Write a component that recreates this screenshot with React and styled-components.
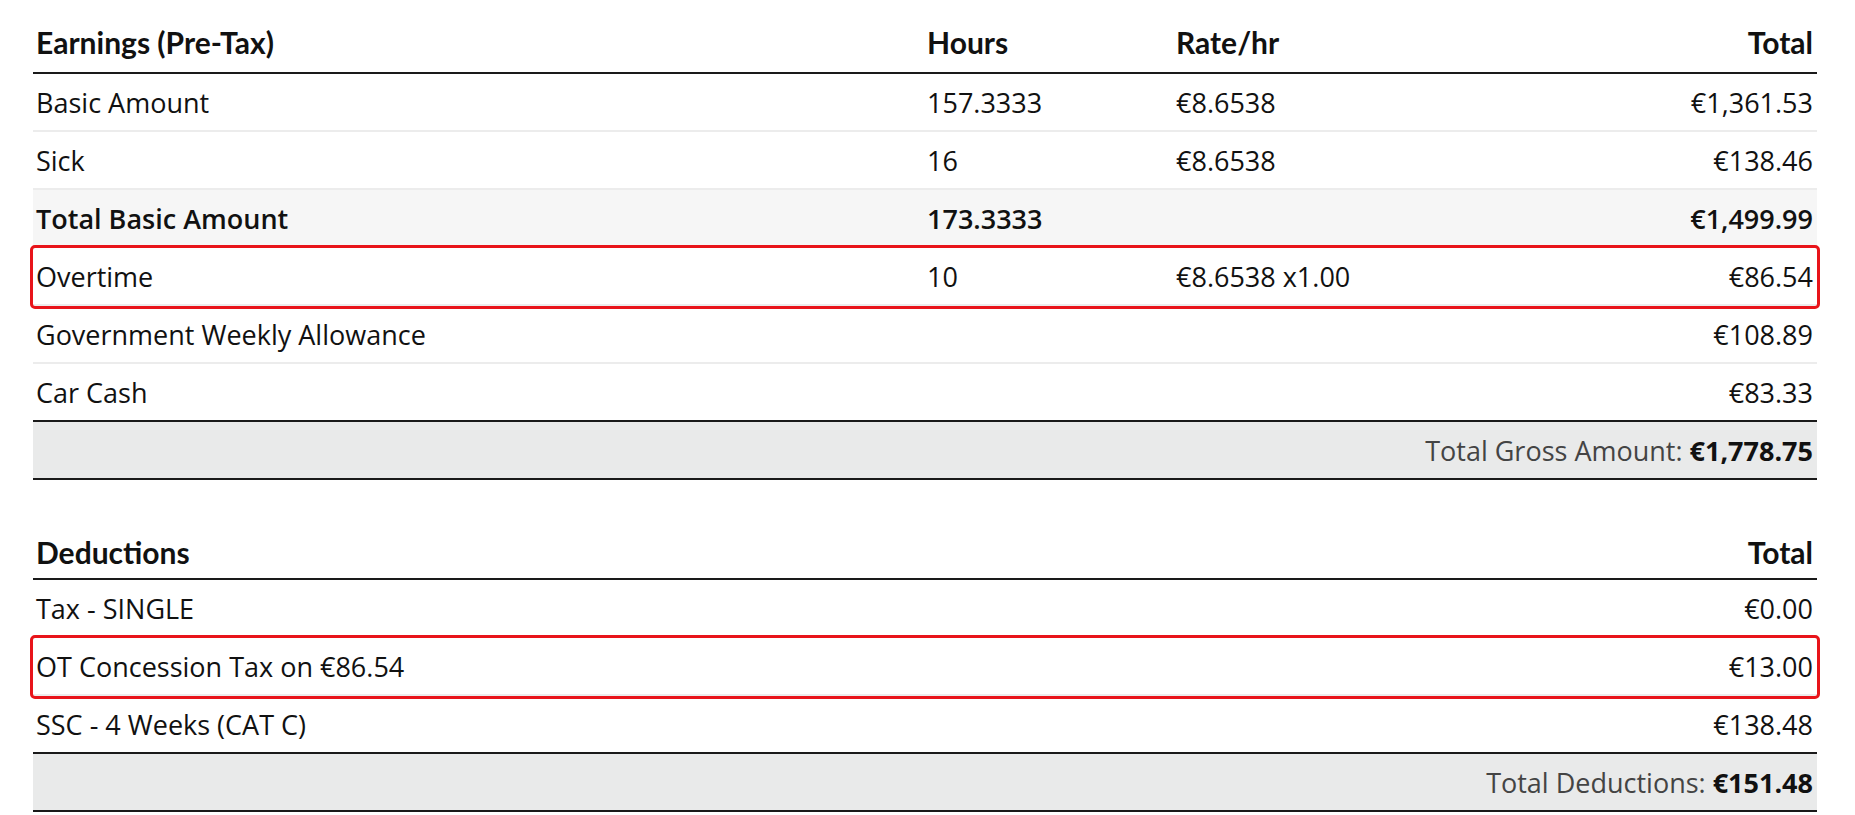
import React from "react";
import styled, { createGlobalStyle } from "styled-components";

const G = createGlobalStyle`
  body { margin: 0; background: #fff; font-family: "Open Sans", sans-serif; color: #111; }
`;
const Wrap = styled.div`padding: 0 38px 0 33px;`;
const Section = styled.div`margin-bottom: ${p => p.$mb || 0}px;`;
const Row = styled.div`
  display: grid;
  grid-template-columns: ${p => p.$cols};
  align-items: center;
  height: ${p => p.$h || 58}px;
  box-sizing: border-box;
  padding: 0 4px 0 3px;
  border-bottom: ${p => p.$thick ? "2px solid #1a1a1a" : "2px solid #ececec"};
  background: ${p => p.$bg || "transparent"};
  font-size: 27px;
  font-weight: ${p => p.$bold ? 600 : 400};
  ${p => p.$hl && `outline: 3px solid #e8141a; outline-offset: 0; border-radius: 2px; position: relative; z-index: 1;`}
`;
const Head = styled(Row)`
  font-family: "Lato", sans-serif;
  font-weight: 700;
  font-size: 30px;
  height: ${p => p.$h || 74}px;
  padding-top: 12px;
`;
const R = styled.span`text-align: right;`;
const Sum = styled.div`
  height: 58px; box-sizing: border-box; display: flex; align-items: center; justify-content: flex-end;
  padding-right: 4px; background: #e9eaea; border-bottom: 2px solid #1a1a1a;
  font-size: 27px; color: #444;
  b { color: #111; font-weight: 700; margin-left: 7px; }
`;
const C1 = "891px 249px 1fr 260px";
const C2 = "1fr 400px";

const earn = [
  ["Basic Amount", "157.3333", "€8.6538", "€1,361.53"],
  ["Sick", "16", "€8.6538", "€138.46"],
  ["Total Basic Amount", "173.3333", "", "€1,499.99", "b"],
  ["Overtime", "10", "€8.6538 x1.00", "€86.54", "h"],
  ["Government Weekly Allowance", "", "", "€108.89"],
  ["Car Cash", "", "", "€83.33", "t"],
];
const ded = [
  ["Tax - SINGLE", "€0.00"],
  ["OT Concession Tax on €86.54", "€13.00", "h"],
  ["SSC - 4 Weeks (CAT C)", "€138.48", "t"],
];

export default function App() {
  return (
    <Wrap>
      <G />
      <Section $mb={34}>
        <Head $cols={C1} $thick><span>Earnings (Pre-Tax)</span><span>Hours</span><span>Rate/hr</span><R>Total</R></Head>
        {earn.map(r => (
          <Row key={r[0]} $cols={C1} $bold={r[4]==="b"} $bg={r[4]==="b" ? "#f6f6f6" : undefined} $hl={r[4]==="h"} $thick={r[4]==="t"}>
            <span>{r[0]}</span><span>{r[1]}</span><span>{r[2]}</span><R>{r[3]}</R>
          </Row>
        ))}
        <Sum>Total Gross Amount: <b>€1,778.75</b></Sum>
      </Section>
      <Section>
        <Head $cols={C2} $thick $h={66}><span>Deductions</span><R>Total</R></Head>
        {ded.map(r => (
          <Row key={r[0]} $cols={C2} $hl={r[2]==="h"} $thick={r[2]==="t"}>
            <span>{r[0]}</span><R>{r[1]}</R>
          </Row>
        ))}
        <Sum>Total Deductions: <b>€151.48</b></Sum>
      </Section>
    </Wrap>
  );
}
